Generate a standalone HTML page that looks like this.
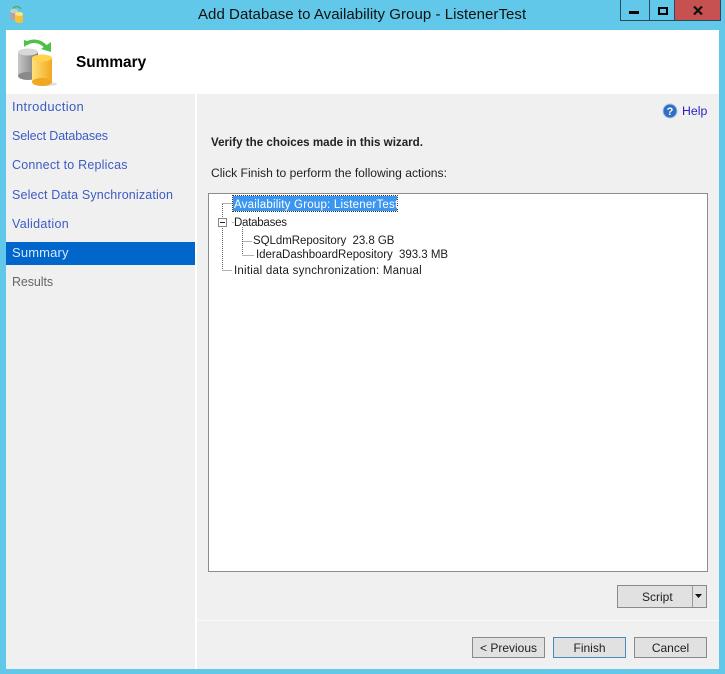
<!DOCTYPE html>
<html><head><meta charset="utf-8"><style>
html,body{margin:0;padding:0}
body{width:725px;height:674px;position:relative;overflow:hidden;background:#62c8ea;font-family:"Liberation Sans",sans-serif;font-size:12px;color:#1c1c1c}
div,svg{position:absolute}
.t{white-space:nowrap;line-height:16px}
.n{left:12px;color:#3c5cc4;font-size:12.5px;white-space:nowrap;line-height:16px}
.b{background:#e1e1e1;border:1px solid #8a8a8a;box-sizing:border-box;text-align:center;font-size:12px;line-height:20px;color:#222}
</style></head><body>
<svg style="left:9px;top:6px" width="16" height="17" viewBox="0 0 16 17"><rect x="1" y="5" width="8" height="9" fill="#aaa"/><ellipse cx="5" cy="5" rx="4" ry="2" fill="#ccc"/><rect x="6" y="8" width="8" height="8" fill="#f5c33b"/><ellipse cx="10" cy="8" rx="4" ry="2" fill="#ffe680"/><ellipse cx="10" cy="15.500" rx="4" ry="1.500" fill="#f5c33b"/><path d="M4 2C6 0 10 0 12 3" fill="none" stroke="#4cb04c" stroke-width="1.300"/></svg>
<div class="t" style="left:198px;top:5px;font-size:15px;line-height:20px;color:#111;letter-spacing:.05px">Add Database to Availability Group - ListenerTest</div>
<div style="left:620px;top:0;width:28px;height:20px;border:1px solid #2b4a5c;border-top:0"></div>
<div style="left:649px;top:0;width:25px;height:20px;border:1px solid #2b4a5c;border-top:0;border-left:0"></div>
<div style="left:675px;top:0;width:45px;height:20px;background:#c75050;border-bottom:1px solid #2b4a5c;border-right:1px solid #2b4a5c"></div>
<div style="left:629px;top:11px;width:10px;height:3px;background:#000"></div>
<div style="left:658px;top:7px;width:6px;height:4px;border:2px solid #000"></div>
<svg style="left:692px;top:6px" width="12" height="9" viewBox="0 0 12 9"><path d="M2 .5 10 8.500M10 .5 2 8.500" stroke="#111" stroke-width="2.200"/></svg>

<div style="left:6px;top:30px;width:713px;height:64px;background:#fff"></div>
<div style="left:6px;top:94px;width:189px;height:575px;background:#f0f0f0"></div>
<div style="left:197px;top:94px;width:522px;height:575px;background:#f0f0f0"></div>
<div style="left:195px;top:94px;width:2px;height:575px;background:#fff"></div>
<svg style="left:16px;top:38px" width="44" height="50" viewBox="0 0 44 50">
<defs><linearGradient id="g" x1="0" x2="1"><stop offset="0" stop-color="#c9c9c9"/><stop offset="1" stop-color="#777"/></linearGradient><linearGradient id="y" x1="0" x2="1"><stop offset="0" stop-color="#ffe27a"/><stop offset="1" stop-color="#f0a820"/></linearGradient></defs>
<ellipse cx="30" cy="46" rx="11" ry="2" fill="#ccc" opacity=".6"/>
<rect x="2" y="14" width="20" height="24" fill="url(#g)"/><ellipse cx="12" cy="38" rx="10" ry="4" fill="#8a8a8a"/><ellipse cx="12" cy="14" rx="10" ry="3.500" fill="#d8d8d8"/>
<rect x="16" y="20" width="20" height="24" fill="url(#y)"/><ellipse cx="26" cy="44" rx="10" ry="4" fill="#f0a820"/><ellipse cx="26" cy="20" rx="10" ry="3.500" fill="#ffd34d"/>
<path d="M10 6C15 2 24 2 30 9" fill="none" stroke="#4fc04a" stroke-width="3.500"/><path d="M25 11 35 14 35 4Z" fill="#4fc04a"/><path d="M8 2 15 4 8 9Z" fill="#4fc04a"/>
</svg>
<div class="t" style="left:76px;top:55px;font-size:15.400px;font-weight:bold;color:#000">Summary</div>

<div class="n" style="top:99px;font-size:13px;letter-spacing:.35px">Introduction</div>
<div class="n" style="top:128px;letter-spacing:-.13px">Select Databases</div>
<div class="n" style="top:157px;letter-spacing:.2px">Connect to Replicas</div>
<div class="n" style="top:187px;letter-spacing:.15px">Select Data Synchronization</div>
<div class="n" style="top:216px;letter-spacing:.3px">Validation</div>
<div style="left:6px;top:242px;width:189px;height:23px;background:#0066cc"></div>
<div class="n" style="top:245px;color:#d5e8fa;font-size:13px;letter-spacing:.15px">Summary</div>
<div class="n" style="top:274px;color:#666;letter-spacing:-.1px">Results</div>

<svg style="left:662px;top:103px" width="16" height="16" viewBox="0 0 16 16"><circle cx="8" cy="8" r="7" fill="#2f6fc4" stroke="#a9c6ea"/><text x="8" y="12" font-family="Liberation Sans" font-size="11" font-weight="bold" text-anchor="middle" fill="#fff">?</text></svg>
<div class="t" style="left:682px;top:103px;color:#2a1fc0;font-size:12.300px">Help</div>
<div class="t" style="left:211px;top:135px;font-weight:bold;color:#222;font-size:11.600px">Verify the choices made in this wizard.</div>
<div class="t" style="left:211px;top:165px;color:#222;font-size:12.100px">Click Finish to perform the following actions:</div>

<div style="left:208px;top:193px;width:500px;height:379px;box-sizing:border-box;background:#fff;border:1px solid #8c8c8c"></div>
<div style="left:233px;top:196px;width:164px;height:15px;background:#3a96f0;outline:1px dotted #333;outline-offset:0"></div>
<svg style="left:208px;top:193px" width="60" height="90" viewBox="0 0 60 90" fill="none" stroke="#666" stroke-dasharray="1 1">
<path d="M14.500 11V77M14.500 10.500H24M24.500 29.500H26M14.500 77.500H24M34.500 34V62M34.500 48.500H44M34.500 62.500H46"/></svg>
<div style="left:218px;top:218px;width:7px;height:7px;background:#fff;border:1px solid #888"></div>
<div style="left:220px;top:222px;width:5px;height:1px;background:#222"></div>
<div class="t" style="left:234px;top:197px;color:#fff;font-size:11.500px;letter-spacing:.21px">Availability Group: ListenerTest</div>
<div class="t" style="left:234px;top:215px;font-size:11.500px;letter-spacing:-.25px">Databases</div>
<div class="t" style="left:253px;top:233px;font-size:11.500px;height:13px;overflow:hidden;letter-spacing:-.05px">SQLdmRepository&nbsp; 23.8 GB</div>
<div class="t" style="left:256px;top:247px;font-size:11.500px;letter-spacing:-.03px">IderaDashboardRepository&nbsp; 393.3 MB</div>
<div class="t" style="left:234px;top:263px;font-size:11.500px;letter-spacing:.23px">Initial data synchronization: Manual</div>

<div class="b" style="left:617px;top:585px;width:90px;height:23px;line-height:22px;text-align:left;padding-left:24px">Script</div>
<div style="left:692px;top:586px;width:1px;height:21px;background:#9a9a9a"></div>
<svg style="left:695px;top:594px" width="7" height="4" viewBox="0 0 7 4"><path d="M0 0H7L3.500 4Z" fill="#111"/></svg>
<div style="left:197px;top:620px;width:522px;height:1px;background:#fafafa"></div>
<div class="b" style="left:472px;top:637px;width:73px;height:21px">&lt; Previous</div>
<div class="b" style="left:553px;top:637px;width:73px;height:21px;border-color:#4a8ab8">Finish</div>
<div class="b" style="left:634px;top:637px;width:73px;height:21px">Cancel</div>
</body></html>
